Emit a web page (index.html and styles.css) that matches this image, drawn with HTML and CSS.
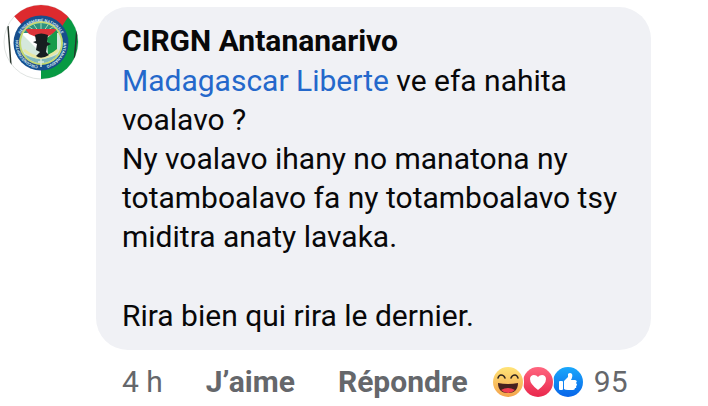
FILE: index.html
```
<!DOCTYPE html>
<html lang="mg">

<head>
  <meta charset="utf-8">
  <meta name="viewport" content="width=device-width, initial-scale=1">
  <title>CIRGN Antananarivo</title>
  <link rel="stylesheet" href="styles.css">
</head>

<body>
  <article class="comment">
    <a href="#" class="avatar" aria-label="CIRGN Antananarivo">
      <svg viewBox="0 0 76 76" aria-hidden="true">
        <defs>
          <clipPath id="round"><circle cx="38" cy="38" r="37"/></clipPath>
          <clipPath id="inner"><circle cx="38" cy="39" r="20"/></clipPath>
          <path id="ring-top" d="M18 52A23 23 0 1 1 58 52"/>
          <path id="ring-left" d="M38 62A23 23 0 0 1 21 24"/>
          <path id="ring-right" d="M55 24A23 23 0 0 1 38 62"/>
        </defs>
        <circle cx="38" cy="38" r="37" fill="#fff" stroke="#e0e4e2"/>
        <g clip-path="url(#round)">
          <path d="M10 11L20 22H60L66 13 62 0H18z" fill="#dd2a2e"/>
          <path d="M38 30L58 24 65 13 76 22V50L72 60 62 76H38z" fill="#079a43"/>
          <path d="M5 22L8 62M74 24L71 60" stroke="#26322b" stroke-width="1.500" fill="none"/>
        </g>
        <circle cx="38" cy="39" r="27.500" fill="#174f8d"/>
        <circle cx="38" cy="39" r="22" fill="#c5d96e"/>
        <circle cx="38" cy="39" r="20" fill="#d5e8dc"/>
        <g clip-path="url(#inner)">
          <path d="M14 17H62V29H14z" fill="#2f927e"/>
          <path d="M38 31L22 20M38 31L29 18M38 31V17M38 31L47 18M38 31L54 20" stroke="#a9dcb5" stroke-width="1"/>
          <path d="M18 29L38 49V29z" fill="#fff"/>
          <path d="M22 25H54L50 30 38 35 26 30z" fill="#dd3439"/>
          <path d="M44 34L54 26V47L45 51z" fill="#179b4b"/>
          <path d="M18 48Q38 62 58 48V60H18z" fill="#80b9ba"/>
        </g>
        <path d="M21 46Q38 61 55 46" stroke="#e8e7a1" stroke-width="3" fill="none"/>
        <path d="M32 31Q38 28 45 31L44 38 48 40 44 42 43 48 46 51Q38 56 33 52L37 48 33 46 34 40 30 38 33 37z" fill="#171e20"/>
        <path d="M38 55V63M35 58H41" stroke="#d7e8d9" stroke-width="1.500"/>
        <g class="seal-text">
          <text><textPath href="#ring-top" startOffset="50%">GENDARMERIE NATIONALE</textPath></text>
          <text><textPath href="#ring-left" startOffset="40%">CIRCONSCRIPTION</textPath></text>
          <text><textPath href="#ring-right" startOffset="60%">ANTANANARIVO</textPath></text>
        </g>
      </svg>
    </a>
    <div class="content">
      <div class="bubble">
        <h1 class="author">CIRGN Antananarivo</h1>
        <p><a href="#" class="mention">Madagascar Liberte</a> ve efa nahita voalavo ?<br>Ny voalavo ihany no manatona ny totamboalavo fa ny totamboalavo tsy miditra anaty lavaka.</p>
        <p>Rira bien qui rira le dernier.</p>
      </div>
      <footer class="actions">
        <time class="age">4 h</time>
        <button type="button" class="action">J’aime</button>
        <button type="button" class="action">Répondre</button>
        <button type="button" class="reactions">
          <svg class="faces" viewBox="0 0 92 32" aria-hidden="true">
            <defs>
              <linearGradient id="haha" x2="0" y2="1"><stop stop-color="#ffe478"/><stop offset="1" stop-color="#f4a34c"/></linearGradient>
              <linearGradient id="love" x2="0" y2="1"><stop stop-color="#ff667f"/><stop offset="1" stop-color="#e9274c"/></linearGradient>
              <linearGradient id="like" x2="0" y2="1"><stop stop-color="#1aa8fb"/><stop offset="1" stop-color="#0865e9"/></linearGradient>
            </defs>
            <circle cx="76" cy="16" r="15" fill="url(#like)"/>
            <rect x="67" y="15" width="4" height="9" rx="1" fill="#fff"/>
            <path d="M72 15L76 11V8Q78 6 80 8 81 10 79 14H83Q86 15 84 17 86 19 84 20 85 22 83 22 83 24 81 24H76Q73 24 72 23z" fill="#fff"/>
            <circle cx="46" cy="16" r="16" fill="#fff"/>
            <circle cx="46" cy="16" r="15" fill="url(#love)"/>
            <path d="M46 24Q38 18 38 13C38 8 44 8 46 11C48 8 54 8 54 13Q54 18 46 24z" fill="#fff"/>
            <circle cx="16" cy="16" r="16" fill="#fff"/>
            <circle cx="16" cy="16" r="15" fill="url(#haha)"/>
            <path d="M6 12Q7 9 9 9Q12 9 13 12M19 12Q20 9 23 9Q25 9 26 12" fill="none" stroke="#30251e" stroke-width="1.500" stroke-linecap="round"/>
            <path d="M6 17Q16 19 26 17C26 24 22 27 16 27C10 27 6 24 6 17z" fill="#46211f"/>
            <path d="M9 24Q16 20 23 24Q20 27 16 27Q12 27 9 24z" fill="#f23d50"/>
          </svg>
          <span>95</span>
        </button>
      </footer>
    </div>
  </article>
</body>

</html>
```
FILE: styles.css
```
body {
  margin: 0;
  background: #fff;
  color: #080809;
  font-family: Roboto, "Liberation Sans", sans-serif;
  font-size: 30px;
  line-height: 39px;
}

a {
  text-decoration: none;
}

.comment {
  display: flex;
  gap: 17px;
  padding: 7px 57px 0 3px;
}

.avatar {
  flex: none;
  width: 76px;
  height: 76px;
  margin-top: -3px;
}

.avatar svg,
.faces {
  display: block;
}

.seal-text {
  fill: #dcecf4;
  font-size: 4px;
  font-weight: bold;
  text-anchor: middle;
}

.content {
  flex: 1;
  min-width: 0;
}

.bubble {
  padding: 14px 26px 15px;
  border-radius: 32px;
  background: #f0f1f5;
}

.author {
  margin: 0;
  font-size: 30px;
  font-weight: bold;
  line-height: 40px;
}

.bubble p {
  margin: 0;
}

.bubble p + p {
  margin-top: 40px;
}

.mention {
  color: #2468cb;
}

.actions {
  display: flex;
  align-items: center;
  margin-top: 12px;
  padding-left: 26px;
  color: #65676b;
}

button {
  padding: 0;
  border: none;
  background: none;
  color: inherit;
  font: inherit;
  cursor: pointer;
}

.action {
  margin-left: 43px;
  font-weight: bold;
}

.reactions {
  display: flex;
  align-items: center;
  gap: 10px;
  margin-left: 24px;
}

.faces {
  width: 92px;
  height: 32px;
}
```
